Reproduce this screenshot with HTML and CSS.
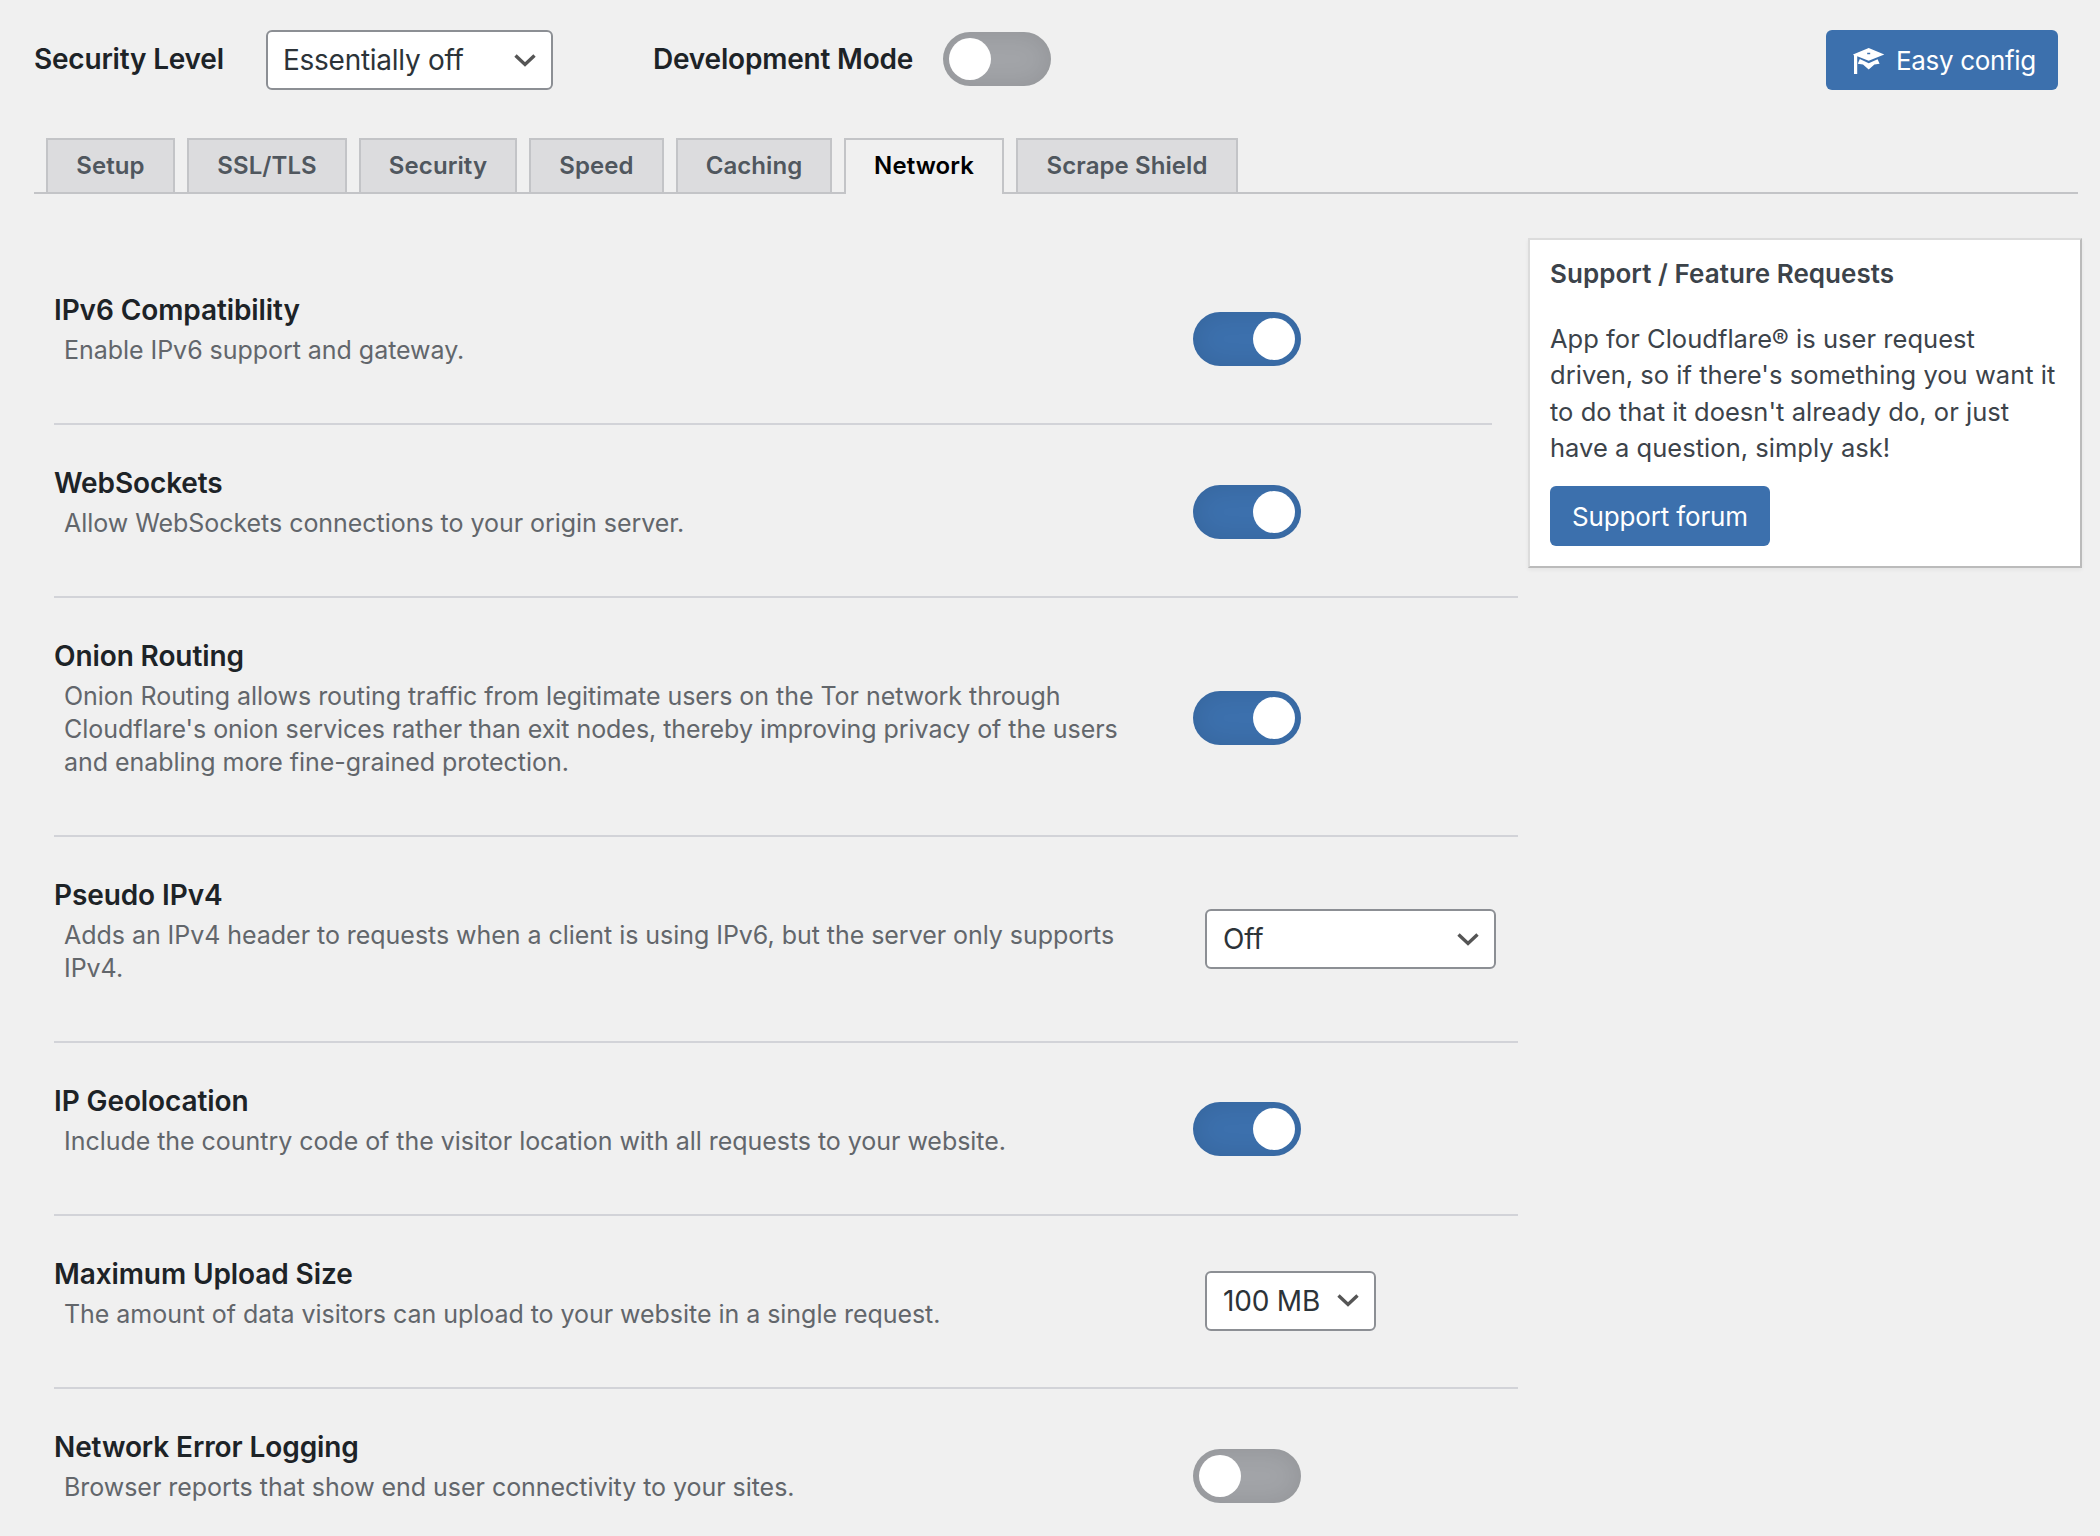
FILE: index.html
```html
<!DOCTYPE html>
<html lang="en">
<head>
<meta charset="utf-8">
<title>App for Cloudflare – Network</title>
<link rel="stylesheet" href="styles.css">
</head>
<body>
<header class="topbar">
  <span class="label label-level">Security Level</span>
  <div class="select select-level"><span>Essentially off</span><svg class="chevron" viewBox="0 0 22 13"><path d="M1.5 1.5 11 10.5 20.5 1.5"/></svg></div>
  <span class="label label-dev">Development Mode</span>
  <div class="toggle toggle-dev"></div>
  <a class="button button-easy"><svg class="cap" viewBox="0 0 32 26"><path fill-rule="evenodd" d="M15.7 0 31.3 6.5 15.7 12.7 4.2 8.3V26H1V7.4L0 6.5ZM14.2 4.7V6.2H17.2V4.7Z"/><path d="M6.8 11 15.7 15.2 24.6 11.2 26.6 15.8 21.4 16.6 15.7 21.4 10 16.6 4.8 15.8Z"/></svg><span>Easy config</span></a>
</header>
<nav class="tabs">
  <a class="tab t-setup">Setup</a>
  <a class="tab t-ssl">SSL/TLS</a>
  <a class="tab t-security">Security</a>
  <a class="tab t-speed">Speed</a>
  <a class="tab t-caching">Caching</a>
  <a class="tab t-network active">Network</a>
  <a class="tab t-scrape">Scrape Shield</a>
</nav>
<div class="content">
  <main class="settings">
    <section class="row first"><div class="text"><h3>IPv6 Compatibility</h3><p>Enable IPv6 support and gateway.</p></div><div class="toggle on"></div></section>
    <section class="row"><div class="text"><h3>WebSockets</h3><p>Allow WebSockets connections to your origin server.</p></div><div class="toggle on"></div></section>
    <section class="row"><div class="text"><h3>Onion Routing</h3><p>Onion Routing allows routing traffic from legitimate users on the Tor network through<br>Cloudflare's onion services rather than exit nodes, thereby improving privacy of the users<br>and enabling more fine-grained protection.</p></div><div class="toggle on"></div></section>
    <section class="row"><div class="text"><h3>Pseudo IPv4</h3><p>Adds an IPv4 header to requests when a client is using IPv6, but the server only supports<br>IPv4.</p></div><div class="select select-pseudo"><span>Off</span><svg class="chevron" viewBox="0 0 22 13"><path d="M1.5 1.5 11 10.5 20.5 1.5"/></svg></div></section>
    <section class="row"><div class="text"><h3>IP Geolocation</h3><p>Include the country code of the visitor location with all requests to your website.</p></div><div class="toggle on toggle-geo"></div></section>
    <section class="row"><div class="text"><h3>Maximum Upload Size</h3><p>The amount of data visitors can upload to your website in a single request.</p></div><div class="select select-upload"><span>100 MB</span><svg class="chevron" viewBox="0 0 22 13"><path d="M1.5 1.5 11 10.5 20.5 1.5"/></svg></div></section>
    <section class="row last"><div class="text"><h3>Network Error Logging</h3><p>Browser reports that show end user connectivity to your sites.</p></div><div class="toggle"></div></section>
  </main>
  <aside class="card">
    <h4>Support / Feature Requests</h4>
    <p>App for Cloudflare® is user request<br>driven, so if there's something you want it<br>to do that it doesn't already do, or just<br>have a question, simply ask!</p>
    <a class="button button-forum">Support forum</a>
  </aside>
</div>
</body>
</html>
```
FILE: styles.css
```css
* { box-sizing: border-box; }
body { margin: 0; height: 1536px; overflow: hidden; background: #f0f0f0; color: #1d2327; font-family: Inter, "Liberation Sans", sans-serif; font-size: 26px; }
h3, h4, p { margin: 0; }
.topbar { display: flex; align-items: center; height: 120px; padding: 0 42px 0 34px; }
.label { margin-bottom: 3px; font-size: 28px; font-weight: 600; line-height: 34px; letter-spacing: -.2px; white-space: nowrap; }
.label-level { width: 232px; }
.label-dev { width: 290px; margin-left: 100px; }
.select { display: flex; flex: none; align-items: center; justify-content: space-between; height: 60px; padding: 0 15px 0 16px; border: 2px solid #8c8f94; border-radius: 6px; background: #fff; color: #2c3338; font-size: 28px; letter-spacing: -.2px; white-space: nowrap; }
.select-level { width: 287px; padding-left: 15px; letter-spacing: -.27px; }
.select-pseudo { width: 291px; margin-left: 12px; }
.select-upload { width: 171px; margin: 0 0 2px 12px; }
.chevron { width: 22px; height: 13px; fill: none; stroke: #555; stroke-width: 3.4; }
.toggle { flex: none; width: 108px; height: 54px; margin-top: 2px; padding: 6px; border-radius: 27px; background: #a2a4a8; box-shadow: inset 0 0 26px rgba(0,0,0,.1); }
.toggle::after { content: ""; display: block; width: 42px; height: 42px; border-radius: 50%; background: #fff; }
.toggle.on { background: #3c70ad; }
.toggle.on::after { margin-left: auto; }
.toggle-dev { margin: 0 0 2px; }
.toggle-geo { margin-top: 0; }
.button { display: flex; align-items: center; height: 60px; border-radius: 6px; background: #3c70ad; color: #fff; white-space: nowrap; }
.button-easy { width: 232px; margin-left: auto; padding: 1px 0 0 27px; gap: 11px; letter-spacing: -.34px; }
.cap { width: 32px; height: 26px; margin-top: 1px; fill: #fff; }
.tabs { display: flex; gap: 12px; height: 74px; margin: 0 22px 0 34px; padding: 18px 0 0 12px; border-bottom: 2px solid #c3c4c7; }
.tab { display: flex; justify-content: center; height: 54px; border: 2px solid #c3c4c7; border-bottom: 0; background: #dcdcde; color: #50575e; font-size: 24px; font-weight: 600; line-height: 51px; letter-spacing: .08px; white-space: nowrap; }
.tab.active { height: 56px; background: #f0f0f0; color: #000; }
.t-setup { width: 129px; }
.t-ssl { width: 160px; }
.t-security { width: 158px; }
.t-speed { width: 135px; }
.t-caching { width: 156px; }
.t-network { width: 160px; }
.t-scrape { width: 222px; }
.content { display: flex; align-items: flex-start; padding-left: 54px; }
.settings { width: 1464px; padding-top: 58px; }
.row { display: flex; align-items: center; border-bottom: 2px solid #d2d3d8; }
.row.first { width: 1438px; }
.row.last { border-bottom: 0; }
.text { width: 1139px; padding: 41px 0 56px; white-space: nowrap; }
.text h3 { font-size: 28px; font-weight: 600; line-height: 34px; letter-spacing: -.1px; }
.text p { margin-top: 7px; padding-left: 10px; color: #62666b; font-size: 25px; line-height: 33px; letter-spacing: -.04px; }
.card { width: 554px; height: 330px; margin: 44px 0 0 10px; padding: 16px 20px; border: 2px solid; border-color: #dcdcdc #bbb #bbb #dcdcdc; background: #fff; color: #3c434a; box-shadow: 0 2px 4px rgba(0,0,0,.05); white-space: nowrap; }
.card h4 { margin-bottom: 29px; font-size: 26px; font-weight: 600; line-height: 36px; letter-spacing: .05px; }
.card p { font-size: 25.5px; line-height: 36.4px; letter-spacing: .03px; }
.button-forum { width: 220px; margin-top: 19px; padding-top: 1px; justify-content: center; letter-spacing: -.15px; }
```
